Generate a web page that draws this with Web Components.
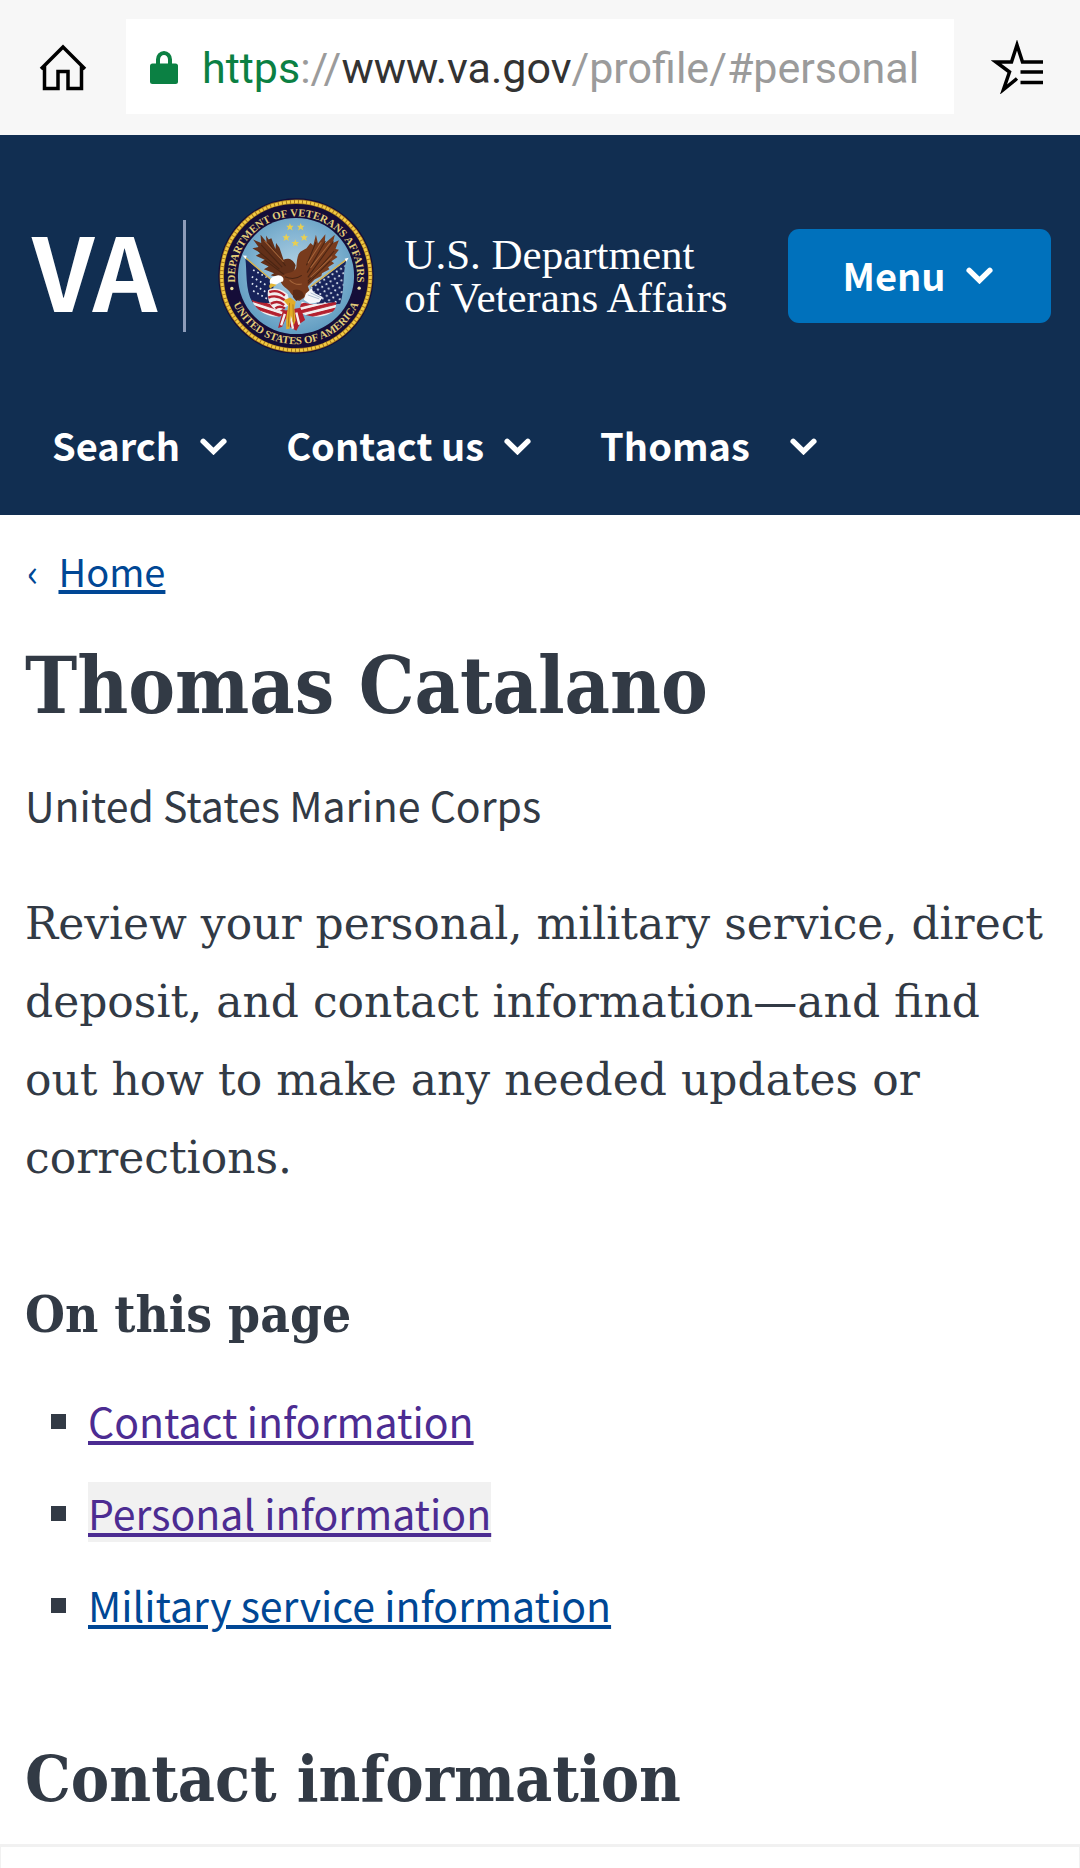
<!DOCTYPE html>
<html lang="en">
<head>
<meta charset="utf-8">
<meta name="viewport" content="width=device-width">
<title>Profile | Veterans Affairs</title>
<style>
  :root {
    --sans: "Noto Sans CJK SC", "Open Sans", sans-serif;
    --slab: "DejaVu Serif", serif;
    --slab-narrow: "DejaVu Serif Condensed", "DejaVu Serif", serif;
    --navy: #112e51;
    --ink: #323a45;
    --link: #004795;
    --visited: #4c2c92;
    --tint: #f1f1f1;
  }
  body { margin: 0; background: #fff; color: var(--ink); font-family: var(--sans); }
</style>
</head>
<body>
<browser-bar></browser-bar>
<va-header>
  <nav-item>Search</nav-item>
  <nav-item>Contact us</nav-item>
  <nav-item class="account">Thomas</nav-item>
</va-header>
<profile-page>
  <span slot="name">Thomas Catalano</span>
  <span slot="branch">United States Marine Corps</span>
  <span slot="intro">Review your personal, military service, direct deposit, and contact information—and find out how to make any needed updates or corrections.</span>
  <page-links slot="toc"></page-links>
</profile-page>

<script>
const define = (name, html) => {
  const template = document.createElement('template');
  template.innerHTML = html;
  customElements.define(name, class extends HTMLElement {
    constructor() {
      super();
      this.attachShadow({ mode: 'open' }).append(template.content.cloneNode(true));
    }
  });
};

define('chevron-icon', `
<style>
  :host { display: block; flex: none; width: 27px; height: 17px; }
  svg { display: block; width: 100%; height: 100%; }
</style>
<svg viewBox="0 0 27 17" aria-hidden="true">
  <path d="M3.200 3.400 13.500 13.400 23.800 3.400" fill="none" stroke="#fff" stroke-width="5.500" stroke-linecap="round" stroke-linejoin="miter"/>
</svg>`);

define('browser-bar', `
<style>
  :host { display: flex; align-items: stretch; background: #f7f7f7; padding: 19px 0 21px; }
  button { border: 0; margin: 0; padding: 0; background: none; font: inherit; color: inherit; }
  .tool { flex: none; width: 126px; display: flex; align-items: center; justify-content: center; }
  .address { flex: 1; min-width: 0; height: 95px; padding: 2px 24px 0; background: #fff; display: flex; align-items: center; gap: 24px;
    font: 43px/60px Roboto, sans-serif; color: #333; white-space: nowrap; overflow: hidden; }
  .secure { color: #0b8043; }
  .dim { color: #9b9b9b; }
  svg { display: block; flex: none; }
</style>
<button class="tool" aria-label="Home page">
  <svg width="48" height="48" viewBox="0 0 48 48"><path d="M2 26 24 4 46 26M5.500 23V45.500H19V28.500H29V45.500H42.500V23" fill="none" stroke="#000" stroke-width="3.500"/></svg>
</button>
<button class="address" aria-label="Edit address">
  <svg width="28" height="33" viewBox="0 0 28 33"><path d="M8 14V8.500a6 6.500 0 0 1 12 0V14" fill="none" stroke="#0b8043" stroke-width="4"/><rect y="12.500" width="28" height="20.500" rx="2.500" fill="#0b8043"/></svg>
  <span><span class="secure">https</span><span class="dim">://</span>www.va.gov<span class="dim">/profile/#personal</span></span>
</button>
<button class="tool" aria-label="Favorites">
  <svg width="52" height="54" viewBox="0 0 52 54"><path d="M52 22H31.500L26 5 20.500 22H5L18.500 32 12.500 49.500 26 38.500" fill="none" stroke="#000" stroke-width="3.500"/><path d="M29.500 32H52M29.500 42.500H52" stroke="#000" stroke-width="3.500"/></svg>
</button>`);

define('va-seal', `
<style>
  :host { display: block; flex: none; width: 156px; height: 156px; }
  svg { display: block; width: 100%; height: 100%; }
  text { font: bold 32px "Liberation Serif", serif; fill: #e3cd7a; }
</style>
<svg viewBox="56 57 462 462" role="img" aria-label="Seal of the Department of Veterans Affairs">
  <defs>
    <radialGradient id="sky" cx=".5" cy=".45" r=".55"><stop offset="0" stop-color="#b3d2e4"/><stop offset=".6" stop-color="#83b4d2"/><stop offset="1" stop-color="#629dc1"/></radialGradient>
    <pattern id="stripes" width="18" height="18" patternUnits="userSpaceOnUse" patternTransform="rotate(18)"><rect width="18" height="18" fill="#f3eeee"/><rect width="18" height="10" fill="#b3202e"/></pattern>
    <pattern id="stripes2" width="18" height="18" patternUnits="userSpaceOnUse" patternTransform="rotate(-14)"><rect width="18" height="18" fill="#f3eeee"/><rect width="18" height="10" fill="#b3202e"/></pattern>
    <pattern id="stars" width="20" height="22" patternUnits="userSpaceOnUse" patternTransform="rotate(15)"><rect width="20" height="22" fill="#17235a"/><circle cx="5" cy="6" r="3" fill="#dfe8f2"/><circle cx="15" cy="17" r="3" fill="#dfe8f2"/></pattern>
    <path id="upper" d="M106 310V292A181 181 0 0 1 468 292V310"/>
    <path id="lower" d="M83 286A204 204 0 0 0 491 286"/>
    <path id="star" d="M0-12 3-4 11-4 5 2 8 10 0 5-8 10-5 2-11-4-3-4Z" fill="#e8cf52"/>
  </defs>
  <circle cx="287" cy="288" r="230" fill="#150d38"/>
  <circle cx="287" cy="288" r="220" fill="none" stroke="#a87a1c" stroke-width="13"/>
  <circle cx="287" cy="288" r="220" fill="none" stroke="#f1c944" stroke-width="9" stroke-dasharray="9 3"/>
  <circle cx="287" cy="288" r="172" fill="url(#sky)"/>
  <text text-anchor="middle"><textPath href="#upper" startOffset="50%">DEPARTMENT OF VETERANS AFFAIRS</textPath></text>
  <text text-anchor="middle"><textPath href="#lower" startOffset="50%">UNITED STATES OF AMERICA</textPath></text>
  <circle cx="97" cy="325" r="5" fill="#efe0a0"/><circle cx="474" cy="324" r="5" fill="#efe0a0"/>
  <use href="#star" x="269" y="143"/><use href="#star" x="301" y="143"/><use href="#star" x="258" y="174"/><use href="#star" x="311" y="174"/><use href="#star" x="285" y="191"/>
  <path d="M137 236C142 270 136 330 158 366L214 372 222 306Z" fill="#17235a"/>
  <path d="M160 270l40 22M156 290l48 28M156 310l46 28M160 332l46 26" stroke="#dfe8f2" stroke-width="5" stroke-dasharray="5 9"/>
  <path d="M156 358C176 370 200 366 214 370L258 392 240 408C214 412 170 398 156 358Z" fill="url(#stripes)"/>
  <path d="M436 242C424 280 432 330 418 370L352 378 330 322Z" fill="url(#stars)"/>
  <path d="M406 366C408 390 392 400 368 406 340 414 312 404 294 394L304 364C334 378 376 366 406 366Z" fill="url(#stripes2)"/>
  <path d="M135 232 224 308M438 238 330 320" stroke="#d8b24a" stroke-width="4"/>
  <path d="M129 227l12 1-3 10ZM443 234l-12 3 5 9Z" fill="#fff"/>
  <path d="M248 392 234 442 246 438 258 412 270 440 288 450 300 428 314 418 300 382Z" fill="#b3202e"/>
  <path d="M254 400 243 434M270 404 278 444M288 396 297 432" stroke="#f3eeee" stroke-width="7"/>
  <path d="M204 330C216 320 246 326 262 342L270 372 238 392C212 386 200 360 204 330Z" fill="#f3eeee"/>
  <path d="M208 336Q232 326 254 346M205 352Q230 342 254 360M212 370Q234 358 252 374M226 384Q238 374 254 384" fill="none" stroke="#b3202e" stroke-width="7"/>
  <path d="M286 256C276 236 262 234 250 240L238 204 228 190 226 208 214 176 206 180 198 168 200 188 182 166 184 190 160 180 176 202 158 206 182 220 168 228 194 240 182 248 206 260 192 268 222 280 212 286 240 294 276 300Z" fill="#623019"/>
  <path d="M240 288C262 276 282 280 288 262 290 236 292 220 304 214L318 206 330 190 338 198 346 166 352 192 374 164 372 192 402 166 396 190 414 182 404 208 414 210 402 226 410 232 392 244 400 250 382 262 386 268 364 280 362 288 342 298 322 318 330 340 296 362C276 350 270 334 262 328 250 318 238 310 240 288Z" fill="#783b1d"/>
  <path d="M184 196 246 262M206 190 256 258M176 214 238 268M196 242 252 284M346 188 318 256M374 184 320 278M398 186 322 292M400 214 322 304M388 244 322 310M254 290Q282 302 304 286" fill="none" stroke="#4a2513" stroke-width="3"/>
  <path d="M194 184 250 246M362 188 322 250M388 190 330 264M394 230 330 292M268 300Q284 316 304 312" fill="none" stroke="#a5653a" stroke-width="3"/>
  <path d="M211 312C204 298 218 288 234 286 246 286 254 296 248 304 240 304 232 314 218 316Z" fill="#fff"/>
  <path d="M214 310C206 312 206 322 212 326 214 320 222 320 230 314Z" fill="#e4b732"/>
  <path d="M316 340 334 324 338 336 366 350 356 366 328 370 310 358Z" fill="#f5f7fa"/>
  <path d="M322 344 356 356M330 338 360 352" stroke="#9fb4cb" stroke-width="2.500"/>
  <path d="M278 330C296 322 314 336 310 350L288 362 278 350Z" fill="#5a2b16"/>
  <path d="M250 360 270 352 286 364 282 384 286 420 280 434 272 404 268 444 258 446 258 412 264 376Z" fill="#e3ad28"/>
  <path d="M268 368 264 438M278 372 280 426" stroke="#a8761a" stroke-width="2.500"/>
</svg>`);

define('va-logo', `
<style>
  :host { display: block; color: #fff; white-space: nowrap; }
  a { display: flex; align-items: center; color: inherit; text-decoration: none; }
  .mark { font-weight: 700; font-size: 101px; line-height: 96px; padding-bottom: 16px; }
  .rule { width: 3px; height: 112px; margin: 0 32px 0 26px; background: #8d9cb9; }
  .words { margin-left: 30px; font: 43px/43px "Liberation Serif", serif; }
</style>
<a href="#home">
  <span class="mark">VA</span>
  <span class="rule"></span>
  <va-seal></va-seal>
  <span class="words">U.S. Department<br>of Veterans Affairs</span>
</a>`);

define('nav-item', `
<style>
  :host { display: block; }
  button { display: flex; align-items: center; gap: 20px; border: 0; margin: 0; padding: 0; background: none; color: #fff;
    font: bold 38px/48px var(--sans); white-space: nowrap; }
  :host(.account) { margin-left: 10px; }
  :host(.account) button { gap: 40px; }
  chevron-icon { margin-top: 2px; }
</style>
<button aria-expanded="false"><slot></slot><chevron-icon></chevron-icon></button>`);

define('va-header', `
<style>
  :host { display: block; background: var(--navy); color: #fff; padding: 63px 29px 46px 32px; }
  .top { display: flex; align-items: center; justify-content: space-between; }
  .menu { flex: none; width: 263px; height: 94px; border: 0; border-radius: 11px; background: #0071bc; color: #fff; padding: 0 4px 2px 0;
    display: flex; align-items: center; justify-content: center; gap: 20px; font: bold 38px/48px var(--sans); }
  nav { display: flex; gap: 59px; margin-top: 67px; padding-left: 20px; }
</style>
<div class="top">
  <va-logo></va-logo>
  <button class="menu" aria-expanded="false">Menu <chevron-icon></chevron-icon></button>
</div>
<nav aria-label="Account"><slot></slot></nav>`);

define('page-links', `
<style>
  :host { display: block; }
  h2 { margin: 0; font: bold 51px/60px var(--slab-narrow); }
  ul { list-style: none; margin: 46px 0 0; padding: 0 0 0 26px; display: flex; flex-direction: column; gap: 32px; }
  li { display: flex; align-items: center; gap: 22px; font-size: 41px; line-height: 60px; }
  li::before { content: ""; width: 15px; height: 15px; margin-top: 3px; background: var(--ink); }
  a { color: var(--link); text-decoration: underline; text-decoration-thickness: 4px; text-underline-offset: 3px; }
  .seen { color: var(--visited); }
  .current { background: var(--tint); }
</style>
<h2>On this page</h2>
<ul>
  <li><a class="seen" href="#contact">Contact information</a></li>
  <li><a class="seen current" href="#personal">Personal information</a></li>
  <li><a href="#military">Military service information</a></li>
</ul>`);

define('profile-page', `
<style>
  :host { display: block; padding-top: 26px; }
  .content { padding: 0 25px; }
  .crumb { display: flex; align-items: baseline; gap: 20px; font-size: 38px; line-height: 60px; color: var(--link); padding-left: 2px; }
  .crumb a { color: inherit; text-decoration: underline; text-decoration-thickness: 4px; text-underline-offset: 3px; }
  h1 { margin: 40px 0 43px; font: bold 78px/90px var(--slab-narrow); }
  p { margin: 0; }
  .branch { font-size: 41px; line-height: 60px; }
  .intro { margin: 51px 0 87px; font: 44px/78px var(--slab); }
  h2 { margin: 105px 0 25px; font: bold 64px/80px var(--slab-narrow); }
  .card { border: solid var(--tint); border-width: 3px 1px 0; height: 22px; }
</style>
<main>
  <div class="content">
    <nav class="crumb" aria-label="Breadcrumb"><span aria-hidden="true">‹</span><a href="#home">Home</a></nav>
    <h1><slot name="name"></slot></h1>
    <p class="branch"><slot name="branch"></slot></p>
    <p class="intro"><slot name="intro"></slot></p>
    <slot name="toc"></slot>
    <h2 id="contact">Contact information</h2>
  </div>
  <div class="card"></div>
</main>`);
</script>
</body>
</html>
